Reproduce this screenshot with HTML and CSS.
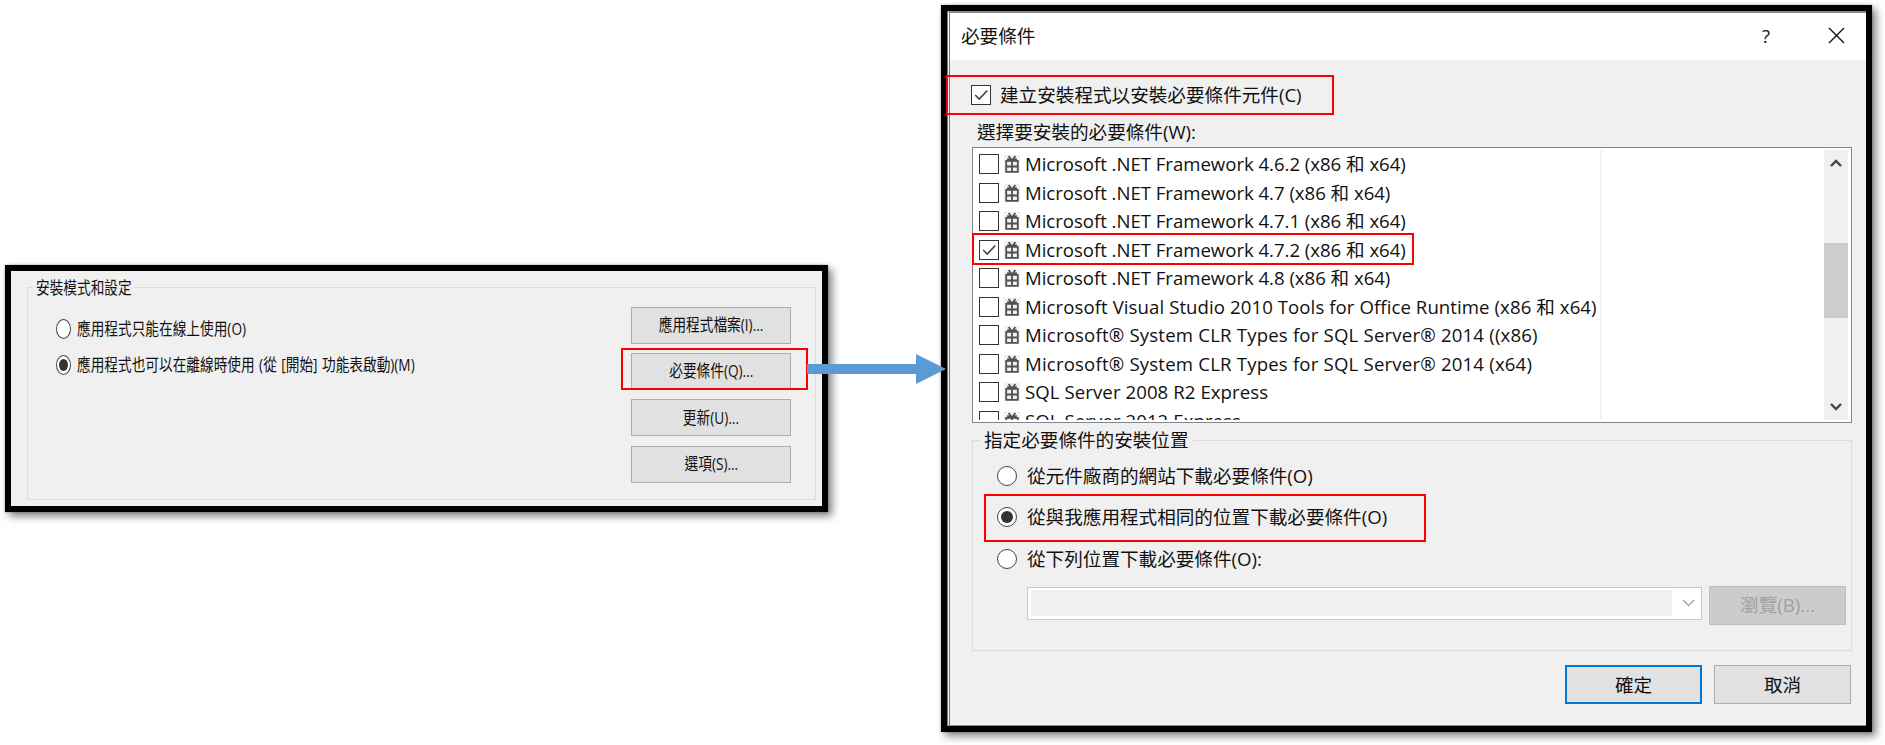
FILE: index.html
```html
<!DOCTYPE html>
<html lang="zh-Hant">
<head>
<meta charset="utf-8">
<title>必要條件</title>
<link rel="stylesheet" href="styles.css">
</head>
<body>
<svg class="defs" width="0" height="0" aria-hidden="true">
  <symbol id="gift" viewBox="0 0 16 18">
    <rect x="0" y="0" width="16" height="18" fill="#f1f1f1"/>
    <path d="M2.2 5.800h11.600v11H2.200zM2 11.500h12M8 4v13M7.600 5 4.600 1M8.400 5l3-4M3.200 3.800 8 5.600l4.800-1.800" fill="none" stroke="#505050" stroke-width="1.800"/>
  </symbol>
</svg>
<main class="stage">
  <section class="window settings">
    <div class="group">
      <div class="legend"><span class="narrow">安裝模式和設定</span></div>
      <div class="options">
        <label class="option"><i class="radio oval"></i><span class="narrow">應用程式只能在線上使用(O)</span></label>
        <label class="option"><i class="radio oval on"></i><span class="narrow long">應用程式也可以在離線時使用 (從 [開始] 功能表啟動)(M)</span></label>
      </div>
      <div class="actions">
        <button class="btn"><span class="narrow">應用程式檔案(I)...</span></button>
        <button class="btn"><span class="narrow">必要條件(Q)...</span></button>
        <button class="btn"><span class="narrow">更新(U)...</span></button>
        <button class="btn"><span class="narrow">選項(S)...</span></button>
      </div>
    </div>
  </section>

  <section class="window dialog">
    <header class="titlebar">
      <span class="title">必要條件</span>
      <span class="help">?</span>
      <svg class="close" width="17" height="17" viewBox="0 0 17 17"><path d="M1 1l15 15M16 1 1 16" stroke="#111" stroke-width="1.4" fill="none"/></svg>
    </header>
    <div class="body">
      <label class="create"><i class="check"><svg viewBox="0 0 20 20"><path d="M3.500 10l4.500 4.500 9-9.500"/></svg></i><span>建立安裝程式以安裝必要條件元件(C)</span></label>
      <div class="caption">選擇要安裝的必要條件(W):</div>
      <div class="list">
        <ul class="rows">
          <li><i class="check"></i><svg class="gift"><use href="#gift"/></svg><span>Microsoft .NET Framework 4.6.2 (x86 和 x64)</span></li>
          <li><i class="check"></i><svg class="gift"><use href="#gift"/></svg><span>Microsoft .NET Framework 4.7 (x86 和 x64)</span></li>
          <li><i class="check"></i><svg class="gift"><use href="#gift"/></svg><span>Microsoft .NET Framework 4.7.1 (x86 和 x64)</span></li>
          <li><i class="check"><svg viewBox="0 0 20 20"><path d="M3.500 10l4.500 4.500 9-9.500"/></svg></i><svg class="gift"><use href="#gift"/></svg><span>Microsoft .NET Framework 4.7.2 (x86 和 x64)</span></li>
          <li><i class="check"></i><svg class="gift"><use href="#gift"/></svg><span>Microsoft .NET Framework 4.8 (x86 和 x64)</span></li>
          <li class="loose"><i class="check"></i><svg class="gift"><use href="#gift"/></svg><span>Microsoft Visual Studio 2010 Tools for Office Runtime (x86 和 x64)</span></li>
          <li class="looser"><i class="check"></i><svg class="gift"><use href="#gift"/></svg><span>Microsoft® System CLR Types for SQL Server® 2014 ((x86)</span></li>
          <li class="looser"><i class="check"></i><svg class="gift"><use href="#gift"/></svg><span>Microsoft® System CLR Types for SQL Server® 2014 (x64)</span></li>
          <li class="loose"><i class="check"></i><svg class="gift"><use href="#gift"/></svg><span>SQL Server 2008 R2 Express</span></li>
          <li class="loose"><i class="check"></i><svg class="gift"><use href="#gift"/></svg><span>SQL Server 2012 Express</span></li>
        </ul>
        <div class="scrollbar">
          <svg width="12" height="8" viewBox="0 0 12 8"><path d="M1 7l5-5 5 5"/></svg>
          <div class="thumb"></div>
          <svg width="12" height="8" viewBox="0 0 12 8"><path d="M1 1l5 5 5-5"/></svg>
        </div>
      </div>
      <div class="location">
        <div class="legend"><span>指定必要條件的安裝位置</span></div>
        <label class="place"><i class="radio"></i><span>從元件廠商的網站下載必要條件(O)</span></label>
        <label class="place"><i class="radio on"></i><span>從與我應用程式相同的位置下載必要條件(O)</span></label>
        <label class="place"><i class="radio"></i><span>從下列位置下載必要條件(O):</span></label>
        <div class="path">
          <div class="combo"><div class="field"></div><svg width="13" height="8" viewBox="0 0 13 8"><path d="M1 1l5.500 5.500L12 1"/></svg></div>
          <button class="wide disabled">瀏覽(B)...</button>
        </div>
      </div>
      <footer class="footer">
        <button class="wide primary">確定</button>
        <button class="wide">取消</button>
      </footer>
    </div>
  </section>

  <div class="mark mark-button"></div>
  <div class="mark mark-create"></div>
  <div class="mark mark-row"></div>
  <div class="mark mark-place"></div>
  <svg class="arrow" width="139" height="30" viewBox="0 0 139 30"><path d="M0 10h109V0l30 15-30 15V20H0z" fill="#5b9bd5"/></svg>
</main>
</body>
</html>
```
FILE: styles.css
```css
* { box-sizing: border-box; }
body {
  margin: 0;
  background: #fff;
  color: #111;
  font: 18.6px/28px "Open Sans", "Noto Sans CJK TC", sans-serif;
}
.defs { position: absolute; }
.stage {
  position: relative;
  display: flex;
  align-items: flex-start;
  gap: 113px;
  width: 1885px;
  height: 745px;
  padding: 5px 0 0 5px;
  overflow: hidden;
}
.window {
  flex: none;
  border: 6px solid #000;
  background: #f0f0f0;
  box-shadow: 4px 4px 8px rgba(0, 0, 0, .5), 0 0 2px rgba(0, 0, 0, .3);
}
span { white-space: nowrap; }
button {
  padding: 0;
  color: #111;
  font: inherit;
  background: #e1e1e1;
  border: 1px solid #adadad;
}

/* settings panel */
.settings {
  width: 823px;
  height: 247px;
  margin-top: 260px;
  padding: 16px 6px 6px 16px;
  font-size: 17px;
}
.group {
  display: grid;
  grid-template-columns: 1fr 160px;
  grid-template-rows: 18px 1fr;
  height: 213px;
  padding-right: 24px;
  border: 1px solid #dcdcdc;
}
.group .legend {
  grid-column: 1 / 3;
  width: 101px;
  margin: -14px 0 0 5px;
  padding-left: 3px;
}
.legend {
  display: flex;
  align-items: center;
  height: 28px;
  background: #f0f0f0;
}
.narrow {
  display: inline-block;
  transform: scaleX(.804);
  transform-origin: left center;
}
.long { word-spacing: 1.100px; }
.options { padding: 9px 0 0 28px; }
.option {
  display: flex;
  align-items: center;
  gap: 6px;
  height: 28px;
  margin-bottom: 8px;
}
.radio {
  flex: none;
  display: grid;
  place-items: center;
  width: 20px;
  height: 20px;
  border: 1.500px solid #444;
  border-radius: 50%;
  background: #fff;
}
.radio.on::after {
  content: "";
  width: 12px;
  height: 12px;
  border-radius: 50%;
  background: #333;
}
.radio.oval { width: 15px; }
.radio.oval.on::after { width: 9px; }
.actions {
  display: flex;
  flex-direction: column;
  gap: 9.400px;
  padding-top: 0.500px;
}
.btn {
  display: flex;
  align-items: center;
  justify-content: center;
  height: 37px;
}
.btn .narrow { transform-origin: center; }

/* prerequisites dialog */
.dialog { width: 931px; height: 727px; }
.titlebar {
  display: flex;
  align-items: center;
  height: 49px;
  padding: 0 21px 2px 11px;
  background: #fff;
  border-top: 2px solid #8a8888;
  border-left: 3px double #777;
}
.help { margin: 0 58px 0 auto; }
.body {
  height: 666px;
  padding: 15px 14px 0 22px;
  border-left: 3px double #777;
  border-bottom: 1px solid #888;
}
.create {
  display: flex;
  align-items: center;
  gap: 9px;
  height: 40px;
  margin-left: -1px;
}
.check {
  flex: none;
  width: 20px;
  height: 20px;
  border: 1.500px solid #333;
  background: #fff;
}
.check svg { display: block; width: 18px; height: 18px; }
.check path, .scrollbar path { fill: none; stroke: #444; stroke-width: 1.800; }
.caption { height: 32px; padding: 3px 0 0 5px; }
.list {
  display: flex;
  justify-content: space-between;
  height: 276px;
  padding: 2px;
  border: 1px solid #828790;
  background: #fff;
}
.rows {
  width: 627px;
  height: 270px;
  margin: 0;
  padding: 0 0 0 4px;
  overflow: hidden;
  list-style: none;
  border-right: 2px solid #eef4fb;
}
.rows li {
  display: flex;
  align-items: center;
  height: 28.500px;
  letter-spacing: -.025px;
}
.rows .loose { letter-spacing: .080px; }
.rows .looser { letter-spacing: .190px; }
.gift { flex: none; width: 16px; height: 18px; margin: 0 5px; }
.scrollbar {
  display: flex;
  flex-direction: column;
  align-items: center;
  width: 24px;
  height: 270px;
  margin-right: 1px;
  padding: 9px 0;
  background: #f0f0f0;
}
.scrollbar path { stroke-width: 2.400; }
.thumb { width: 24px; height: 75px; margin: 76px 0 auto; background: #cdcdcd; }
.location {
  height: 211px;
  margin-top: 17px;
  padding: 0 5px 0 24px;
  border: 1px solid #dcdcdc;
}
.location .legend {
  width: 213px;
  margin: -15px 0 0 -17px;
  padding-left: 4px;
}
.place {
  display: flex;
  align-items: center;
  gap: 10px;
  height: 28px;
  margin-bottom: 13.300px;
}
.legend + .place { margin-top: 8px; }
.path { display: flex; gap: 7px; padding-left: 30px; }
.combo {
  display: flex;
  align-items: center;
  justify-content: space-between;
  width: 675px;
  height: 33px;
  margin-top: 1px;
  padding: 0 6px 0 3px;
  background: #fff;
  border: 1px solid #c8c8c8;
}
.field { width: 641px; height: 26px; background: #f0f0f0; }
.combo path { fill: none; stroke: #aaa; stroke-width: 1.500; }
.wide { width: 137px; height: 39px; }
.disabled { color: #a0a0a0; background: #ccc; border-color: #bfbfbf; }
.footer { display: flex; justify-content: flex-end; gap: 12px; margin-top: 14px; padding-right: 1px; }
.primary { border: 2px solid #0078d7; }

/* annotations laid over both windows */
.mark { position: absolute; border: 2px solid #f00; }
.mark-button { left: 621px; top: 348px; width: 187px; height: 42px; }
.mark-create { left: 946px; top: 75px; width: 388px; height: 40px; }
.mark-row { left: 972px; top: 233px; width: 442px; height: 32px; }
.mark-place { left: 984px; top: 494px; width: 442px; height: 48px; }
.arrow { position: absolute; left: 807px; top: 354px; }
```
